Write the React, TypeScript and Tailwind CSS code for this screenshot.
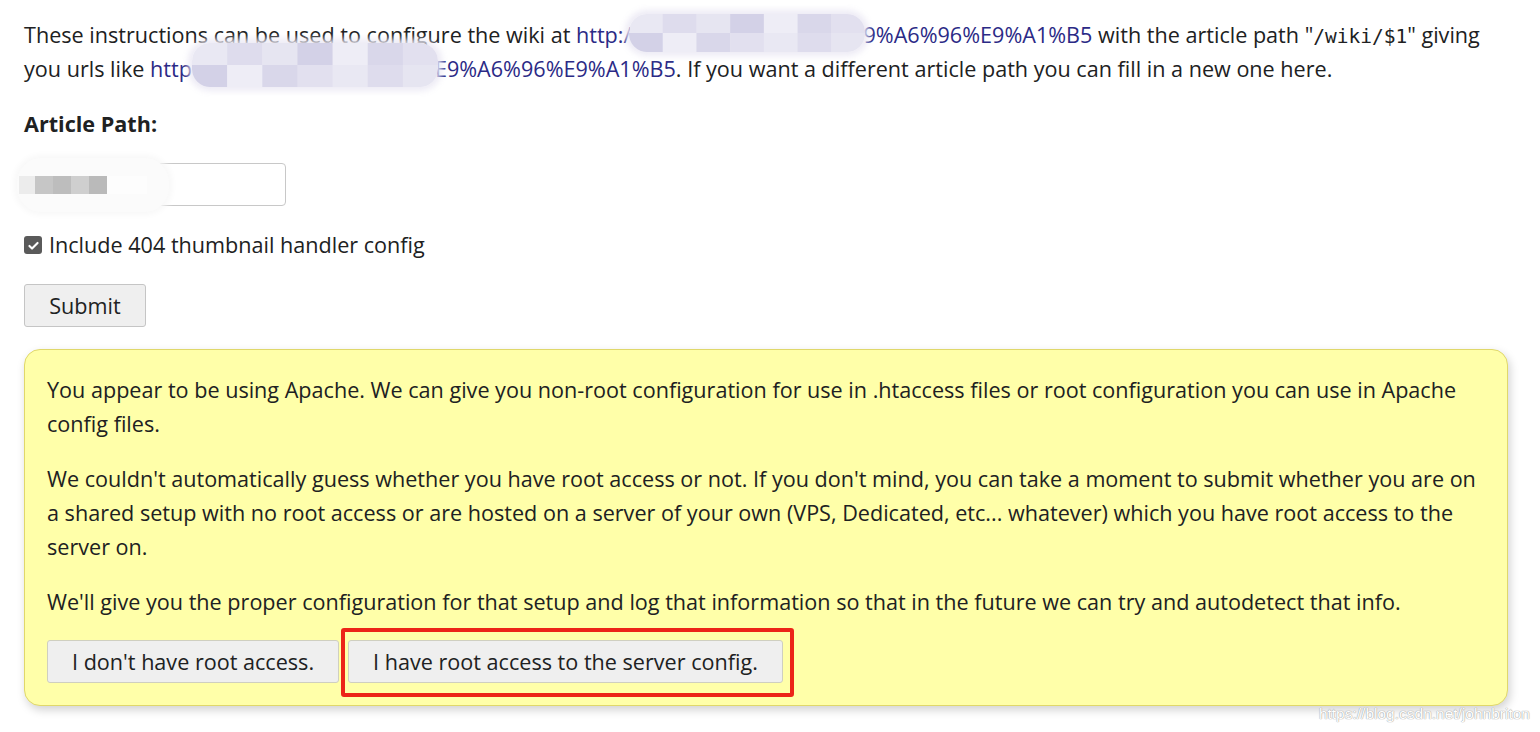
import React from "react";

const font = { fontFamily: '"Open Sans", "Noto Sans", sans-serif' };

function Mosaic({ w, h, cells, colors }: { w: number; h: number; cells: number; colors: string[] }) {
  const cw = w / cells;
  return (
    <svg width={w} height={h} className="block">
      {Array.from({ length: cells }).map((_, i) => (
        <rect key={i} x={i * cw} y={0} width={cw + 0.5} height={h / 2} fill={colors[i % colors.length]} />
      ))}
      {Array.from({ length: cells }).map((_, i) => (
        <rect key={"b" + i} x={i * cw} y={h / 2} width={cw + 0.5} height={h / 2} fill={colors[(i + 3) % colors.length]} />
      ))}
    </svg>
  );
}

function Blur({ w, h, left, top }: { w: number; h: number; left: number; top: number }) {
  return (
    <span
      className="absolute overflow-hidden rounded-[18px] shadow-[0_0_6px_4px_rgba(235,233,244,0.9)]"
      style={{ width: w, height: h, left, top }}
    >
      <Mosaic w={w} h={h} cells={Math.round(w / 34)} colors={["#e9e8f3", "#dedced", "#e6e5f1", "#d3d1e7", "#eeedf6", "#d9d7ea", "#e2e0ef"]} />
    </span>
  );
}

export default function App() {
  return (
    <div className="min-h-screen w-full bg-white pl-6 pr-8 pt-[18px] text-[21.6px] leading-[34px] text-[#202122]" style={font}>
      <p className="relative">
        These instructions can be used to configure the wiki at{" "}
        <span className="text-[#2b2a86]">
          http:/
          <span className="relative inline-block h-[34px] w-[232px] align-top">
            <Blur w={236} h={38} left={-2} top={-4} />
          </span>
          9%A6%96%E9%A1%B5
        </span>{" "}
        with the article path "<span className="font-['DejaVu_Sans_Mono',monospace] text-[19.5px] leading-none">/wiki/$1</span>" giving you urls like{" "}
        <span className="text-[#2b2a86]">
          http
          <span className="relative inline-block h-[34px] w-[243px] align-top">
            <Blur w={246} h={44} left={0} top={-9} />
          </span>
          E9%A6%96%E9%A1%B5
        </span>
        . If you want a different article path you can fill in a new one here.
      </p>

      <p className="mt-[21px] font-bold">Article Path:</p>

      <div className="relative mt-[22px] w-[262px]">
        <input
          className="block h-[43px] w-[262px] rounded-[4px] border border-[#c8c8c8] bg-white px-2 outline-none"
          defaultValue=""
        />
        <span className="absolute left-[-7px] top-[-5px] flex h-[54px] w-[152px] items-center rounded-[24px] bg-[#fbfbfb] shadow-[0_0_6px_3px_rgba(248,248,248,1)]">
          <span className="ml-[2px] flex h-[18px] items-center bg-[#f0f0f0]">
            <span className="h-[18px] w-[16px] bg-[#ececec]" />
            <span className="h-[18px] w-[18px] bg-[#c6c6c6]" />
            <span className="h-[18px] w-[18px] bg-[#bdbdbd]" />
            <span className="h-[18px] w-[18px] bg-[#cfcfcf]" />
            <span className="h-[18px] w-[18px] bg-[#bababa]" />
            <span className="h-[18px] w-[40px] bg-[#fdfdfd]" />
          </span>
        </span>
      </div>

      <label className="mt-[22px] flex items-center gap-[7px]">
        <span className="flex h-[18px] w-[18px] items-center justify-center rounded-[3px] bg-[#5a5a5a]">
          <svg width="13" height="13" viewBox="0 0 16 16">
            <path d="M3 8.5l3.2 3.2L13 4.8" fill="none" stroke="#fff" strokeWidth="2.6" strokeLinecap="round" strokeLinejoin="round" />
          </svg>
        </span>
        Include 404 thumbnail handler config
      </label>

      <button className="mt-[22px] block h-[43px] w-[122px] rounded-[3px] border border-[#c5c5c5] bg-[#efefef] text-[21.6px] text-[#202122]">
        Submit
      </button>

      <div className="mt-[22px] w-[1484px] rounded-[16px] border border-[#e0d86a] bg-[#ffffa9] px-[22px] pb-[22px] pt-[23px] shadow-[2px_4px_10px_rgba(0,0,0,0.18)]">
        <p>
          You appear to be using Apache. We can give you non-root configuration for use in .htaccess files or root configuration you can use in Apache config files.
        </p>
        <p className="mt-[21px]">
          We couldn't automatically guess whether you have root access or not. If you don't mind, you can take a moment to submit whether you are on a shared setup with no root access or are hosted on a server of your own (VPS, Dedicated, etc... whatever) which you have root access to the server on.
        </p>
        <p className="mt-[21px]">
          We'll give you the proper configuration for that setup and log that information so that in the future we can try and autodetect that info.
        </p>
        <div className="mt-[21px] flex gap-[9px]">
          <button className="h-[43px] rounded-[3px] border border-[#cfcfc0] bg-[#efefef] px-[24px] text-[21.6px] text-[#202122]">
            I don't have root access.
          </button>
          <div className="relative">
            <button className="h-[43px] rounded-[3px] border border-[#cfcfc0] bg-[#efefef] px-[24px] text-[21.6px] text-[#202122]">
              I have root access to the server config.
            </button>
            <span className="pointer-events-none absolute left-[-7px] right-[-11px] top-[-12px] bottom-[-14px] rounded-[3px] border-[4px] border-[#ec2418]" />
          </div>
        </div>
      </div>

      <div className="flex justify-end">
        <span
          className="mr-[-22px] mt-[-3px] text-[15.5px] leading-[22px] text-white [text-shadow:0_0_1px_#9a9a9a,0_0_1px_#9a9a9a]"
          style={{ fontFamily: '"Liberation Sans", Arial, sans-serif' }}
        >
          https://blog.csdn.net/johnbriton
        </span>
      </div>
    </div>
  );
}
